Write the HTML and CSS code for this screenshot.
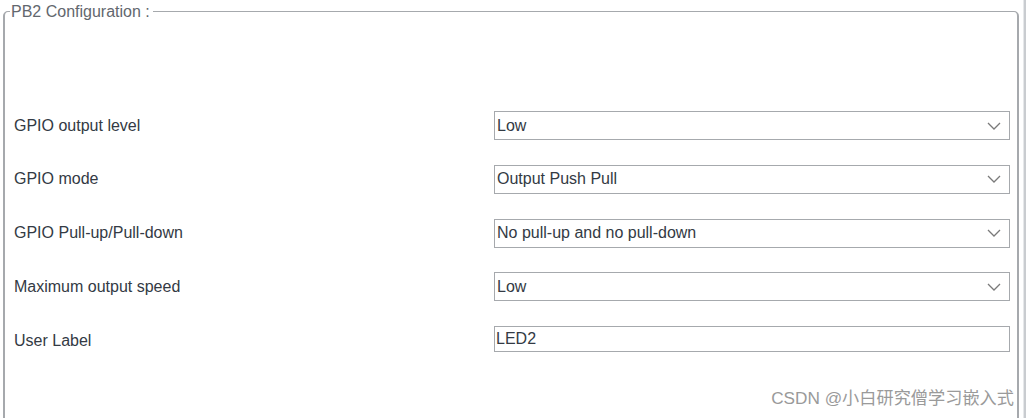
FILE: index.html
```html
<!DOCTYPE html>
<html>
<head>
<meta charset="utf-8">
<link rel="stylesheet" href="styles.css">
</head>
<body>
<div class="frame">
  <fieldset class="config">
    <legend class="config-title">PB2 Configuration :</legend>
    <div class="rows">
      <div class="row">
        <span class="label">GPIO output level</span>
        <div class="select"><span>Low</span><svg class="chev" viewBox="0 0 14 8" width="14" height="8"><path d="M1 1 L7 7 L13 1" fill="none" stroke="#7a7a7a" stroke-width="1.3"/></svg></div>
      </div>
      <div class="row">
        <span class="label">GPIO mode</span>
        <div class="select"><span>Output Push Pull</span><svg class="chev" viewBox="0 0 14 8" width="14" height="8"><path d="M1 1 L7 7 L13 1" fill="none" stroke="#7a7a7a" stroke-width="1.3"/></svg></div>
      </div>
      <div class="row">
        <span class="label">GPIO Pull-up/Pull-down</span>
        <div class="select"><span>No pull-up and no pull-down</span><svg class="chev" viewBox="0 0 14 8" width="14" height="8"><path d="M1 1 L7 7 L13 1" fill="none" stroke="#7a7a7a" stroke-width="1.3"/></svg></div>
      </div>
      <div class="row">
        <span class="label">Maximum output speed</span>
        <div class="select"><span>Low</span><svg class="chev" viewBox="0 0 14 8" width="14" height="8"><path d="M1 1 L7 7 L13 1" fill="none" stroke="#7a7a7a" stroke-width="1.3"/></svg></div>
      </div>
      <div class="row">
        <span class="label">User Label</span>
        <div class="text-input">LED2</div>
      </div>
    </div>
    <div class="watermark">CSDN @小白研究僧学习嵌入式</div>
  </fieldset>
  <div class="scroll-edge"></div>
</div>
</body>
</html>
```

FILE: styles.css
```css
html, body {
  margin: 0;
  padding: 0;
  background: #ffffff;
  height: 100%;
  overflow: hidden;
}
body {
  font-family: "Liberation Sans", Arial, sans-serif;
  color: #333a44;
}
.frame {
  display: flex;
  height: 418px;
  overflow: hidden;
}
.config {
  margin: 4px 0 0 3px;
  padding: 0 8px 0 9px;
  width: 1016px;
  box-sizing: border-box;
  height: 440px;
  border: 1px solid #a6a9ad;
  border-left: 2px solid #a6a9ad;
  border-right: 2px solid #a6a9ad;
  border-radius: 5px;
  min-width: 0;
}
.config-title {
  padding: 0 3px 0 1px;
  margin-left: -4px;
  font-size: 16px;
  color: #62676e;
  line-height: 15px;
}
.rows {
  display: flex;
  flex-direction: column;
  gap: 24.75px;
  padding-top: 92px;
}
.row {
  display: grid;
  grid-template-columns: 480px 516px;
  align-items: center;
  height: 29px;
}
.label {
  font-size: 16px;
  color: #333a44;
}
.select {
  height: 29px;
  box-sizing: border-box;
  border: 1px solid #a6a9ad;
  display: flex;
  align-items: center;
  justify-content: space-between;
  padding: 0 8px 0 2px;
  font-size: 16px;
  color: #333a44;
}
.chev {
  display: block;
}
.text-input {
  align-self: start;
  height: 26px;
  box-sizing: border-box;
  border: 1px solid #a6a9ad;
  display: flex;
  align-items: center;
  padding: 0 1px;
  font-size: 16px;
  color: #333a44;
}
.watermark {
  margin-top: 29px;
  margin-right: -5px;
  text-align: right;
  font-family: "Liberation Sans", "Noto Sans CJK SC", sans-serif;
  font-size: 17.2px;
  color: #9a9a9a;
}
.scroll-edge {
  margin-left: 4px;
  width: 2px;
  background: #c9ccd0;
  border-left: 1px solid #e6e8ea;
}
```
